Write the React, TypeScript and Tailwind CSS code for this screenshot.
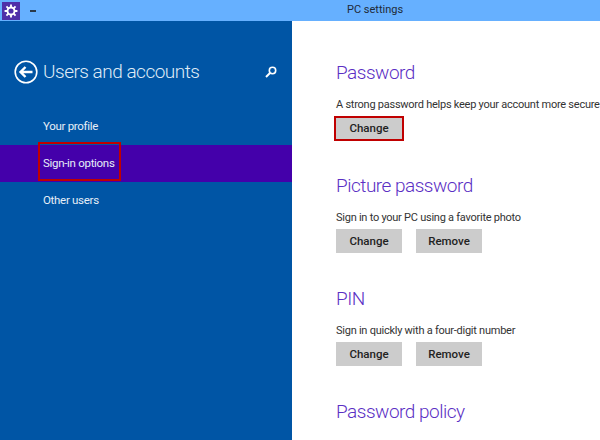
const FONT = "font-['Roboto','Noto_Sans',sans-serif]";

const Section = ({ title, text, buttons, marked }: { title: string; text: string; buttons: string[]; marked?: boolean }) => (
  <section className="h-[113px]">
    <h2 className="h-[34px] text-[19px] leading-[34px] font-light tracking-[-0.5px] text-[#5b2fc4]">{title}</h2>
    <p className="mt-[6px] h-[18px] text-[11px] leading-[18px] tracking-[-0.25px] whitespace-nowrap text-[#333333]">{text}</p>
    <div className={'flex gap-[14px] ' + (marked ? 'mt-[4px]' : 'mt-[2px]')}>
      {buttons.map((b) => (
        <button
          key={b}
          className={
            'w-[66px] bg-[#cccccc] pt-[1px] text-[11.5px] font-medium text-[#222222] ' +
            (marked ? 'h-[21px] outline-2 outline-[#c00000]' : 'h-[24px]')
          }
        >
          {b}
        </button>
      ))}
    </div>
  </section>
);

export default function App() {
  return (
    <div className={'flex h-[440px] w-[600px] flex-col overflow-hidden bg-white ' + FONT}>
      {/* Title bar */}
      <header className="flex h-[21px] shrink-0 items-center bg-[#66b0ff]">
        <div className="ml-[2px] flex h-[18px] w-[18px] items-center justify-center bg-[#4f2fa8]">
          <svg width="14" height="14" viewBox="0 0 24 24" fill="none" stroke="#ffffff" strokeWidth="3.2">
            <circle cx="12" cy="12" r="6" />
            <path d="M12 1v5M12 18v5M1 12h5M18 12h5M4.2 4.2l3.6 3.6M16.2 16.2l3.6 3.6M19.8 4.2l-3.6 3.6M7.8 16.2l-3.6 3.6" />
          </svg>
        </div>
        <div className="ml-[10px] h-[2px] w-[6px] bg-[#2a3a4a]" />
        <span className="ml-[311px] text-[11px] text-[#1f2a38]">PC settings</span>
      </header>

      <div className="flex min-h-0 flex-1">
        {/* Left panel */}
        <aside className="w-[292px] shrink-0 bg-[#0055a5] text-white">
          <div className="flex h-[87px] items-start pt-[39px] pl-[14px] pr-[15px]">
            <svg width="24" height="24" viewBox="0 0 24 24" fill="none" stroke="#ffffff" strokeWidth="1.6">
              <circle cx="12" cy="12" r="10.8" />
              <path strokeWidth="2.4" d="M18.5 12H7M11.5 7l-5 5 5 5" />
            </svg>
            <span className="ml-[5px] text-[19px] leading-[24px] font-light tracking-[-0.5px] text-[#dfeaf5]">Users and accounts</span>
            <svg width="12" height="12" viewBox="0 0 12 12" fill="none" stroke="#ffffff" strokeWidth="1.6" className="mt-[6px] ml-auto">
              <circle cx="7.5" cy="4.5" r="3.2" />
              <path strokeWidth="2" d="M5 7L1 11" />
            </svg>
          </div>
          <nav className="text-[11.5px] tracking-[-0.3px] text-[#e6eef7]">
            <div className="flex h-[37px] items-center pt-[1px] pl-[43px]">Your profile</div>
            <div className="relative flex h-[37px] items-center bg-[#4400aa] pl-[43px]">
              Sign-in options
              <div className="absolute top-[-3px] left-[38px] h-[39px] w-[83px] border-2 border-[#c00000]" />
            </div>
            <div className="flex h-[37px] items-center pl-[43px]">Other users</div>
          </nav>
        </aside>

        {/* Right panel */}
        <main className="min-w-0 flex-1 pt-[35px] pl-[44px]">
          <Section title="Password" text="A strong password helps keep your account more secure" buttons={['Change']} marked />
          <Section title="Picture password" text="Sign in to your PC using a favorite photo" buttons={['Change', 'Remove']} />
          <Section title="PIN" text="Sign in quickly with a four-digit number" buttons={['Change', 'Remove']} />
          <Section title="Password policy" text="" buttons={[]} />
        </main>
      </div>
    </div>
  );
}
